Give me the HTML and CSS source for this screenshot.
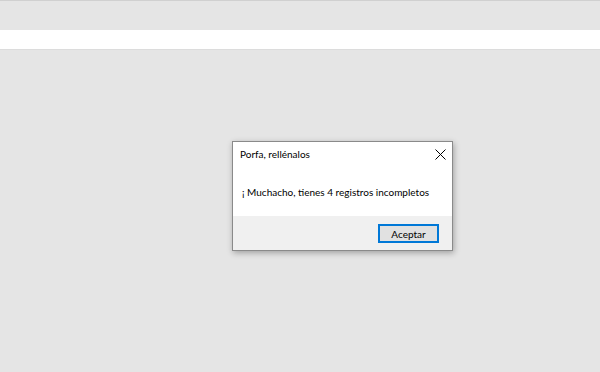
FILE: index.html
```html
<!DOCTYPE html>
<html lang="es">
<head>
    <meta charset="UTF-8">
    <meta name="viewport" content="width=device-width, initial-scale=1.0">
    <title>Registros</title>
    <link rel="stylesheet" href="styles.css">
</head>
<body>
    <div class="barra-superior"></div>
    <div class="franja"></div>
    <div class="contenido"></div>

    <!-- Mensaje de aviso -->
    <div class="dialogo">
        <div class="dialogo-titulo">
            <span>Porfa, rellénalos</span>
            <svg class="cerrar" width="11" height="11" viewBox="0 0 11 11">
                <path d="M0.5 0.5 L10.5 10.5 M10.5 0.5 L0.5 10.5" stroke="#000" stroke-width="1" fill="none"/>
            </svg>
        </div>
        <div class="dialogo-cuerpo">¡ Muchacho, tienes 4 registros incompletos</div>
        <div class="dialogo-pie">
            <button class="boton">Aceptar</button>
        </div>
    </div>
</body>
</html>
```

FILE: styles.css
```css
/* Estilos */
body {
    margin: 0;
    padding: 0;
    background-color: #e5e5e5;
    font-family: 'Lato', 'Liberation Sans', sans-serif;
    font-size: 10px;
    color: #000;
    height: 100vh;
    overflow: hidden;
}

.barra-superior {
    height: 29px;
    border-top: 1px solid #d0d0d0;
}

.franja {
    height: 19px;
    background-color: #fff;
    border-bottom: 1px solid #dcdcdc;
}

.dialogo {
    position: absolute;
    left: 232px;
    top: 141px;
    width: 219px;
    height: 108px;
    border: 1px solid #8a8a8a;
    background-color: #fff;
    box-shadow: 1px 2px 6px rgba(0, 0, 0, 0.3);
    display: flex;
    flex-direction: column;
    white-space: nowrap;
}

.dialogo-titulo {
    height: 24px;
    display: flex;
    align-items: center;
    justify-content: space-between;
    padding: 0 7px 0 7px;
}

.cerrar {
    margin-right: -1px;
}

.dialogo-cuerpo {
    flex: 1;
    display: flex;
    align-items: center;
    padding: 1px 0 0 9px;
}

.dialogo-pie {
    height: 34px;
    background-color: #f0f0f0;
    display: flex;
    justify-content: flex-end;
    align-items: flex-start;
    padding: 8px 13px 0 0;
    box-sizing: border-box;
}

.boton {
    width: 61px;
    height: 19px;
    padding: 0;
    font-family: inherit;
    font-size: 10px;
    color: #000;
    background-color: #e1e1e1;
    border: 1px solid #0078d7;
    box-shadow: inset 0 0 0 1px #0078d7;
}
```
